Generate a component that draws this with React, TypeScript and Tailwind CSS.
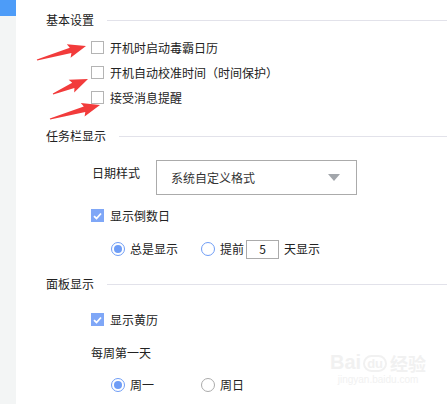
import React from "react";

const font = { fontFamily: '"Microsoft YaHei", "Noto Sans CJK SC", "Noto Sans", sans-serif' };

function Header({ title }: { title: string }) {
  return (
    <div className="flex h-[24px] items-center pl-[30px]">
      <span className="text-[12px] text-[#222]">{title}</span>
      <div className="ml-[13px] h-px flex-1 bg-[#e2e2ea]" />
    </div>
  );
}

function Checkbox({ label, checked }: { label: string; checked?: boolean }) {
  return (
    <div className="flex h-[25px] items-center pl-[75px]">
      {checked ? (
        <span className="flex h-[13px] w-[13px] items-center justify-center bg-[#7fa7f7]">
          <svg width="9" height="8" viewBox="0 0 9 8">
            <path d="M1 4.2 L3.5 6.5 L8 1.5" fill="none" stroke="#fff" strokeWidth="1.8" />
          </svg>
        </span>
      ) : (
        <span className="h-[13px] w-[13px] border border-[#b4b4b4] bg-white" />
      )}
      <span className="ml-[6px] text-[12px] text-[#222]">{label}</span>
    </div>
  );
}

function Radio({ checked, blue }: { checked?: boolean; blue?: boolean }) {
  if (checked)
    return (
      <span className="flex h-[14px] w-[14px] items-center justify-center rounded-full border border-[#6f9df6] bg-white">
        <span className="h-[8px] w-[8px] rounded-full bg-[#6f9df6]" />
      </span>
    );
  return (
    <span
      className={
        blue
          ? "h-[14px] w-[14px] rounded-full border border-[#6f9df6] bg-white"
          : "h-[14px] w-[14px] rounded-full border border-[#ababab] bg-white"
      }
    />
  );
}

function arrowPoints(x1: number, y1: number, x2: number, y2: number) {
  const len = Math.hypot(x2 - x1, y2 - y1);
  const ux = (x2 - x1) / len;
  const uy = (y2 - y1) / len;
  const nx = -uy;
  const ny = ux;
  const bx = x2 - ux * 16;
  const by = y2 - uy * 16;
  const p = (x: number, y: number) => `${x.toFixed(1)},${y.toFixed(1)}`;
  return [
    p(x1 + nx * 0.6, y1 + ny * 0.6),
    p(bx + nx * 2.8, by + ny * 2.8),
    p(bx + nx * 7 - ux * 2, by + ny * 7 - uy * 2),
    p(x2, y2),
    p(bx - nx * 7 - ux * 2, by - ny * 7 - uy * 2),
    p(bx - nx * 2.8, by - ny * 2.8),
    p(x1 - nx * 0.6, y1 - ny * 0.6),
  ].join(" ");
}

export default function App() {
  return (
    <div className="relative flex h-[404px] w-[447px] overflow-hidden bg-white" style={font}>
      {/* left strip */}
      <div className="flex w-[16px] flex-col bg-[#f3f5f5]">
        <div className="h-[16px] bg-[#4d9cf8]" />
      </div>

      <div className="flex flex-1 flex-col pt-[8px]">
        <Header title="基本设置" />
        <div className="mt-[3px]">
          <Checkbox label="开机时启动毒霸日历" />
          <Checkbox label="开机自动校准时间（时间保护）" />
          <Checkbox label="接受消息提醒" />
        </div>

        <div className="mt-[14px]">
          <Header title="任务栏显示" />
        </div>

        <div className="mt-[12px] flex pl-[76px]">
          <span className="mt-[4px] w-[64px] text-[12px] text-[#222]">日期样式</span>
          <div className="flex h-[35px] w-[201px] items-center justify-between border border-[#ababab] pl-[14px] pr-[16px]">
            <span className="text-[12px] text-[#333]">系统自定义格式</span>
            <svg width="12" height="7" viewBox="0 0 12 7">
              <path d="M0 0 L12 0 L6 7 Z" fill="#a2a6ab" />
            </svg>
          </div>
        </div>

        <div className="mt-[8px]">
          <Checkbox label="显示倒数日" checked />
        </div>

        <div className="mt-[9px] flex h-[24px] items-center pl-[95px] text-[12px] text-[#222]">
          <Radio checked />
          <span className="ml-[5px] w-[71px]">总是显示</span>
          <Radio blue />
          <span className="ml-[5px]">提前</span>
          <span className="ml-[2px] flex h-[19px] w-[33px] items-center justify-center border border-[#ababab]">5</span>
          <span className="ml-[5px]">天显示</span>
        </div>

        <div className="mt-[11px]">
          <Header title="面板显示" />
        </div>

        <div className="mt-[11px]">
          <Checkbox label="显示黄历" checked />
        </div>

        <div className="mt-[9px] flex h-[24px] items-center pl-[75px] text-[12px] text-[#222]">每周第一天</div>

        <div className="mt-[8px] flex h-[24px] items-center pl-[95px] text-[12px] text-[#222]">
          <Radio checked />
          <span className="ml-[5px] w-[71px]">周一</span>
          <Radio />
          <span className="ml-[5px]">周日</span>
        </div>
      </div>

      {/* watermark */}
      <div className="pointer-events-none absolute left-[330px] top-[352px] flex flex-col items-center text-[#f1f1f1]" style={{ fontFamily: '"Liberation Sans", "Noto Sans CJK SC", sans-serif' }}>
        <div className="flex items-end text-[20px] font-bold leading-none">
          <span>Bai</span>
          <span className="ml-[2px] rounded-full border-2 border-[#f1f1f1] px-[2px] text-[13px]">du</span>
          <span className="ml-[3px] text-[18px]" style={{ fontFamily: '"Noto Sans CJK SC", sans-serif' }}>经验</span>
        </div>
        <div className="mt-[3px] text-[10px] leading-none">jingyan.baidu.com</div>
      </div>

      {/* red annotation arrows */}
      <svg className="pointer-events-none absolute left-0 top-0" width="447" height="404">
        <polygon points={arrowPoints(37, 60, 86, 46)} fill="#f23b3b" />
        <polygon points={arrowPoints(53, 94, 88, 79)} fill="#f23b3b" />
        <polygon points={arrowPoints(50, 119, 100, 105)} fill="#f23b3b" />
      </svg>
    </div>
  );
}
